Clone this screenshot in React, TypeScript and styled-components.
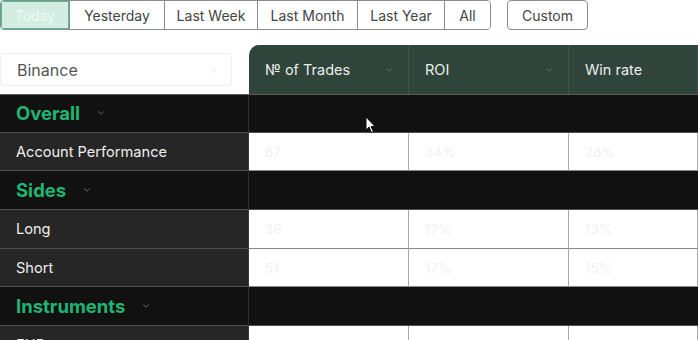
import React from "react";
import styled, { createGlobalStyle } from "styled-components";

const Global = createGlobalStyle`
  html, body { margin: 0; padding: 0; background: #ffffff; }
  body { font-family: "Inter", "Noto Sans", sans-serif; overflow: hidden; }
  * { box-sizing: border-box; }
`;

const Page = styled.div`
  position: relative;
  width: 698px;
  height: 340px;
  overflow: hidden;
`;

const TabBar = styled.div`
  display: flex;
  gap: 16px;
  height: 30px;
`;

const TabGroup = styled.div`
  display: flex;
  border: 1px solid #8c8c8c;
  border-radius: 4px;
  overflow: hidden;
`;

const Tab = styled.button<{ $active?: boolean; $w: number }>`
  width: ${(p) => p.$w}px;
  height: 100%;
  font-family: inherit;
  font-size: 14px;
  color: ${(p) => (p.$active ? "#eefaf4" : "#444")};
  background: ${(p) => (p.$active ? "#d3ede2" : "#fff")};
  border: none;
  border-left: 1px solid #8c8c8c;
  padding: 0;
  &:first-child {
    border-left: none;
    outline: 1px solid #4fc08d;
    outline-offset: -1px;
  }
`;

const CustomButton = styled.button`
  width: 81px;
  height: 30px;
  font-family: inherit;
  font-size: 14px;
  color: #444;
  background: #fff;
  border: 1px solid #8c8c8c;
  border-radius: 4px;
`;

const TopRow = styled.div`
  display: flex;
  margin-top: 15px;
  height: 49px;
`;

const SelectorCell = styled.div`
  width: 249px;
  flex: none;
  padding-top: 8px;
`;

const Selector = styled.div`
  width: 232px;
  height: 33px;
  border: 1px solid #efefef;
  border-radius: 4px;
  display: flex;
  align-items: center;
  justify-content: space-between;
  padding: 0 12px 0 16px;
  font-size: 16px;
  color: #555;
`;

const Header = styled.div`
  flex: 1;
  display: flex;
  background: #2f453b;
  border-top-left-radius: 10px;
`;

const HeaderCell = styled.div<{ $w?: number }>`
  ${(p) => (p.$w ? `width: ${p.$w}px; flex: none;` : "flex: 1;")}
  display: flex;
  align-items: center;
  justify-content: space-between;
  padding: 0 14px 0 16px;
  border-right: 1px solid #3f5549;
  color: #ececec;
  font-size: 14.5px;
`;

const Row = styled.div<{ $section?: boolean; $first?: boolean }>`
  display: flex;
  height: 38.7px;
  background: ${(p) => (p.$section ? "#111111" : "#ffffff")};
  ${(p) => (p.$first ? "border-top: 1px solid #5a5a5a;" : "")}
`;

const LabelCell = styled.div<{ $section?: boolean }>`
  width: 249px;
  flex: none;
  display: flex;
  align-items: center;
  gap: ${(p) => (p.$section ? "16px" : "0")};
  padding-left: 16px;
  background: ${(p) => (p.$section ? "#111111" : "#262626")};
  border-right: 1px solid ${(p) => (p.$section ? "#2e2e2e" : "#3a3a3a")};
  border-bottom: 1px solid #505050;
  color: ${(p) => (p.$section ? "#1fb573" : "#efefef")};
  font-size: ${(p) => (p.$section ? "18.5px" : "14.6px")};
  font-weight: ${(p) => (p.$section ? 700 : 400)};
`;

const SectionFill = styled.div`
  flex: 1;
  border-bottom: 1px solid #505050;
`;

const DataCell = styled.div<{ $w?: number }>`
  ${(p) => (p.$w ? `width: ${p.$w}px; flex: none;` : "flex: 1;")}
  display: flex;
  align-items: center;
  padding-left: 16px;
  border-right: 1px solid #aaaaaa;
  border-bottom: 1px solid #8a8a8a;
  color: #f1f1f1;
  font-size: 13.5px;
`;

const Cursor = styled.svg`
  position: absolute;
  left: 365px;
  top: 116px;
`;

const Chevron = ({ color = "#666", size = 10 }: { color?: string; size?: number }) => (
  <svg width={size} height={size} viewBox="0 0 10 10" fill="none">
    <path d="M2.5 3.8 L5 6.2 L7.5 3.8" stroke={color} strokeWidth="1" strokeLinecap="round" />
  </svg>
);

const ChevronRight = () => (
  <svg width="10" height="10" viewBox="0 0 10 10" fill="none">
    <path d="M4 2.5 L6.5 5 L4 7.5" stroke="#e2e2e2" strokeWidth="1" strokeLinecap="round" />
  </svg>
);

const tabs = [
  { label: "Today", w: 68, active: true },
  { label: "Yesterday", w: 95 },
  { label: "Last Week", w: 93 },
  { label: "Last Month", w: 100 },
  { label: "Last Year", w: 87 },
  { label: "All", w: 46 },
];

type RowDef =
  | { kind: "section"; label: string }
  | { kind: "data"; label: string; values: string[] };

const rows: RowDef[] = [
  { kind: "section", label: "Overall" },
  { kind: "data", label: "Account Performance", values: ["87", "34%", "28%"] },
  { kind: "section", label: "Sides" },
  { kind: "data", label: "Long", values: ["36", "17%", "13%"] },
  { kind: "data", label: "Short", values: ["51", "17%", "15%"] },
  { kind: "section", label: "Instruments" },
  { kind: "data", label: "EUR", values: ["", "", ""] },
];

export default function App() {
  return (
    <Page>
      <Global />
      <TabBar>
        <TabGroup>
          {tabs.map((t) => (
            <Tab key={t.label} $w={t.w} $active={t.active}>
              {t.label}
            </Tab>
          ))}
        </TabGroup>
        <CustomButton>Custom</CustomButton>
      </TabBar>
      <TopRow>
        <SelectorCell>
          <Selector>
            <span>Binance</span>
            <ChevronRight />
          </Selector>
        </SelectorCell>
        <Header>
          <HeaderCell $w={160}>
            <span>№ of Trades</span>
            <Chevron color="#5b7266" />
          </HeaderCell>
          <HeaderCell $w={160}>
            <span>ROI</span>
            <Chevron color="#5b7266" />
          </HeaderCell>
          <HeaderCell>
            <span>Win rate</span>
          </HeaderCell>
        </Header>
      </TopRow>
      {rows.map((r, i) =>
        r.kind === "section" ? (
          <Row key={i} $section $first={i === 0}>
            <LabelCell $section>
              <span>{r.label}</span>
              <Chevron color="#666" />
            </LabelCell>
            <SectionFill />
          </Row>
        ) : (
          <Row key={i}>
            <LabelCell>{r.label}</LabelCell>
            <DataCell $w={160}>{r.values[0]}</DataCell>
            <DataCell $w={160}>{r.values[1]}</DataCell>
            <DataCell>{r.values[2]}</DataCell>
          </Row>
        )
      )}
      <Cursor width="12" height="18" viewBox="0 0 12 18">
        <path d="M1 1 L1 14 L4 11 L6.5 16.5 L8.5 15.5 L6 10.5 L10 10.5 Z" fill="#fff" stroke="#111" strokeWidth="1" />
      </Cursor>
    </Page>
  );
}
